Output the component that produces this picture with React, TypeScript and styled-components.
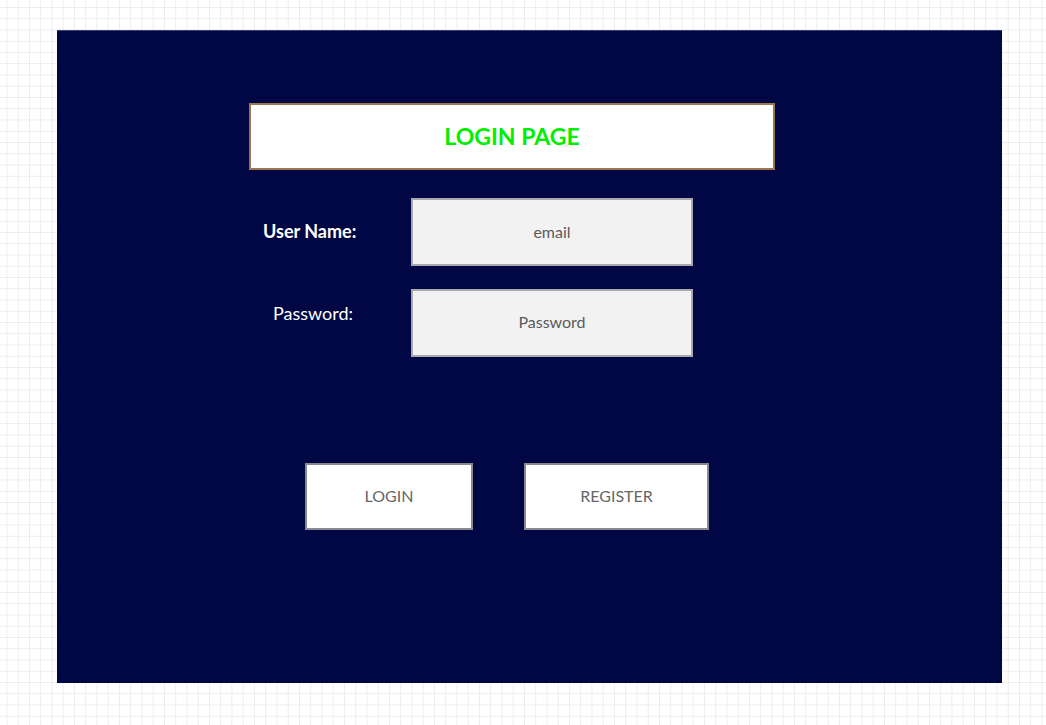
import React from "react";
import styled, { createGlobalStyle } from "styled-components";

const GlobalStyle = createGlobalStyle`
  html, body {
    margin: 0;
    padding: 0;
  }
  body {
    width: 1046px;
    height: 725px;
    overflow: hidden;
    font-family: Lato, "Open Sans", sans-serif;
    background-color: #ffffff;
    background-image:
      linear-gradient(to right, #ececf1 1px, transparent 1px),
      linear-gradient(to bottom, #ececf1 1px, transparent 1px);
    background-size: 11.25px 11.25px;
    background-position: 6.5px 7px;
  }
`;

const Page = styled.div`
  padding: 30px 0 0 57px;
`;

const Panel = styled.main`
  width: 945px;
  height: 653px;
  box-sizing: border-box;
  background: #000744;
  border-top: 1px solid #3a4270;
  padding: 72px 0 0 192px;
  display: flex;
  flex-direction: column;
`;

const TitleCard = styled.h1`
  margin: 0;
  width: 526px;
  height: 67px;
  box-sizing: border-box;
  padding-bottom: 2px;
  background: #ffffff;
  border: 2px solid #9c7552;
  display: flex;
  align-items: center;
  justify-content: center;
  color: #00ee00;
  font-family: Lato, sans-serif;
  font-size: 23px;
  font-weight: 700;
  letter-spacing: 0;
`;

const Form = styled.form`
  margin-top: 28px;
  display: flex;
  flex-direction: column;
  gap: 23px;
`;

const Row = styled.div`
  display: flex;
  align-items: flex-start;
`;

const Label = styled.label<{ $bold?: boolean; $offset: number; $shift: number }>`
  width: 162px;
  box-sizing: border-box;
  padding-top: ${(p) => p.$offset}px;
  padding-left: ${(p) => p.$shift}px;
  color: #ffffff;
  font-size: 18px;
  font-weight: ${(p) => (p.$bold ? 700 : 400)};
  line-height: 22px;
`;

const Field = styled.div<{ $lift: number }>`
  width: 282px;
  height: 68px;
  box-sizing: border-box;
  padding-bottom: ${(p) => p.$lift}px;
  background: #f2f2f2;
  border: 2px solid #a9a9ad;
  display: flex;
  align-items: center;
  justify-content: center;
  color: #5a5a5a;
  font-size: 16px;
`;

const Buttons = styled.div`
  margin-top: 106px;
  margin-left: 56px;
  display: flex;
  gap: 51px;
`;

const Button = styled.button<{ $w: number }>`
  width: ${(p) => p.$w}px;
  height: 67px;
  box-sizing: border-box;
  padding: 0 0 2px 0;
  background: #ffffff;
  border: 2px solid #8a8a8e;
  color: #666666;
  font-family: Lato, sans-serif;
  font-size: 16px;
  cursor: pointer;
`;

export default function App() {
  return (
    <>
      <GlobalStyle />
      <Page>
        <Panel>
          <TitleCard>LOGIN PAGE</TitleCard>
          <Form onSubmit={(e) => e.preventDefault()}>
            <Row>
              <Label $bold $offset={22} $shift={14}>User Name:</Label>
              <Field $lift={2}>email</Field>
            </Row>
            <Row>
              <Label $offset={13} $shift={24}>Password:</Label>
              <Field $lift={3}>Password</Field>
            </Row>
          </Form>
          <Buttons>
            <Button $w={168} type="button">LOGIN</Button>
            <Button $w={185} type="button">REGISTER</Button>
          </Buttons>
        </Panel>
      </Page>
    </>
  );
}
